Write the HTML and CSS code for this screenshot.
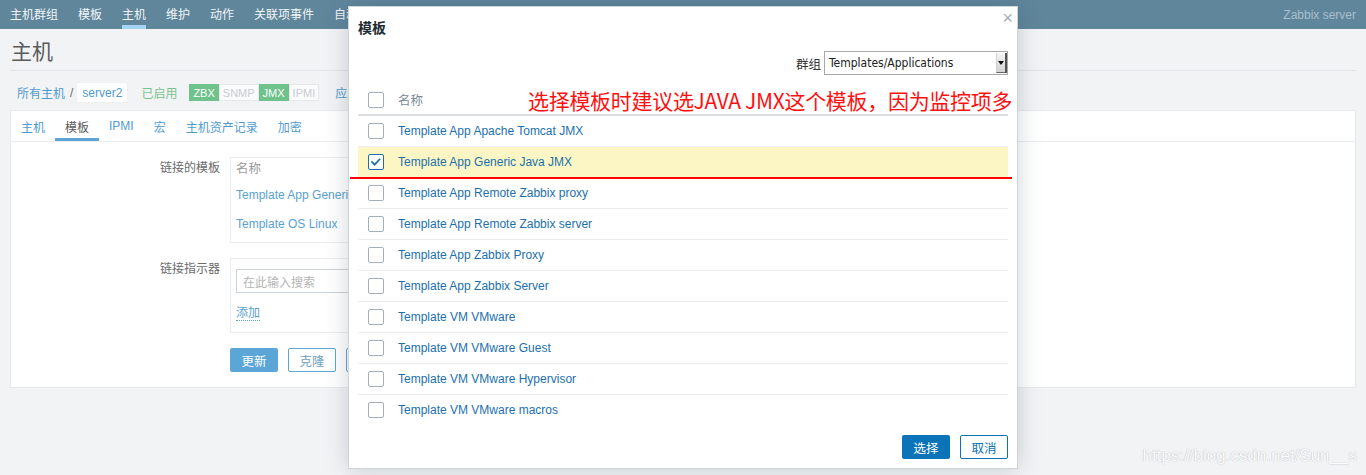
FILE: index.html
```html
<!DOCTYPE html>
<html lang="zh">
<head>
<meta charset="utf-8">
<title>主机</title>
<link rel="stylesheet" href="styles.css">
</head>
<body>
<header class="topbar">
  <nav class="menu">
    <a class="menu-item">主机群组</a>
    <a class="menu-item">模板</a>
    <a class="menu-item active">主机</a>
    <a class="menu-item">维护</a>
    <a class="menu-item">动作</a>
    <a class="menu-item">关联项事件</a>
    <a class="menu-item">自动发现</a>
    <a class="menu-item">服务</a>
  </nav>
  <span class="server-name">Zabbix server</span>
</header>

<main class="page">
  <h1 class="page-title">主机</h1>

  <div class="crumbs">
    <a class="crumb-link first">所有主机</a>
    <span class="crumb-sep">/</span>
    <span class="crumb-current">server2</span>
    <span class="status-on">已启用</span>
    <span class="tags"><span class="tag on">ZBX</span><span class="tag">SNMP</span><span class="tag on">JMX</span><span class="tag">IPMI</span></span>
    <a class="crumb-link apps">应用集</a>
  </div>

  <section class="tabs-box">
    <ul class="tabs">
      <li class="tab">主机</li>
      <li class="tab active">模板</li>
      <li class="tab">IPMI</li>
      <li class="tab">宏</li>
      <li class="tab">主机资产记录</li>
      <li class="tab">加密</li>
    </ul>

    <div class="form">
      <div class="form-row">
        <div class="form-label">链接的模板</div>
        <div class="form-field">
          <div class="linked-box">
            <div class="linked-head">名称</div>
            <div class="linked-item"><a class="plain-link">Template App Generic Java JMX</a></div>
            <div class="linked-item"><a class="plain-link">Template OS Linux</a></div>
          </div>
        </div>
      </div>

      <div class="form-row">
        <div class="form-label">链接指示器</div>
        <div class="form-field">
          <div class="link-box">
            <div class="search-input">在此输入搜索</div>
            <a class="add-link">添加</a>
          </div>
        </div>
      </div>

      <div class="form-row">
        <div class="form-label"></div>
        <div class="form-field buttons">
          <span class="btn primary">更新</span>
          <span class="btn outline">克隆</span>
          <span class="btn outline">全克隆</span>
        </div>
      </div>
    </div>
  </section>
</main>

<div class="dialog">
  <div class="dialog-title">模板</div>
  <span class="dialog-close">×</span>

  <div class="filter-row">
    <span class="filter-label">群组</span>
    <div class="select">
      <span class="select-text">Templates/Applications</span>
      <span class="select-btn"><span class="select-arrow"></span></span>
    </div>
  </div>

  <div class="tpl-table">
    <div class="tpl-row head">
      <span class="cb"></span>
      <span class="head-text">名称</span>
    </div>
    <div class="tpl-row"><span class="cb"></span><a class="tpl-link">Template App Apache Tomcat JMX</a></div>
    <div class="tpl-row selected"><span class="cb checked"><svg viewBox="0 0 16 16" width="14" height="14"><path d="M3.5 8 L6.5 11 L12 5" fill="none" stroke="#1c6fab" stroke-width="2" stroke-linecap="square"/></svg></span><a class="tpl-link">Template App Generic Java JMX</a></div>
    <div class="tpl-row"><span class="cb"></span><a class="tpl-link">Template App Remote Zabbix proxy</a></div>
    <div class="tpl-row"><span class="cb"></span><a class="tpl-link">Template App Remote Zabbix server</a></div>
    <div class="tpl-row"><span class="cb"></span><a class="tpl-link">Template App Zabbix Proxy</a></div>
    <div class="tpl-row"><span class="cb"></span><a class="tpl-link">Template App Zabbix Server</a></div>
    <div class="tpl-row"><span class="cb"></span><a class="tpl-link">Template VM VMware</a></div>
    <div class="tpl-row"><span class="cb"></span><a class="tpl-link">Template VM VMware Guest</a></div>
    <div class="tpl-row"><span class="cb"></span><a class="tpl-link">Template VM VMware Hypervisor</a></div>
    <div class="tpl-row last"><span class="cb"></span><a class="tpl-link">Template VM VMware macros</a></div>
  </div>

  <div class="dialog-footer">
    <span class="dbtn primary">选择</span>
    <span class="dbtn outline">取消</span>
  </div>

  <div class="note">选择模板时建议选JAVA JMX这个模板，因为监控项多</div>
  <div class="note-line"></div>
</div>

<div class="watermark">https://blog.csdn.net/Sun__s</div>
</body>
</html>
```

FILE: styles.css
```css
* { box-sizing: border-box; }

html, body { height: 100%; }

body {
  margin: 0;
  background: #f2f3f5;
  font-family: "Liberation Sans", "Noto Sans CJK SC", sans-serif;
  font-size: 12px;
  color: #1f2c33;
  position: relative;
  overflow: hidden;
}

a { text-decoration: none; cursor: pointer; }

/* ---------- top bar ---------- */
.topbar {
  height: 29px;
  background: #60869c;
  display: flex;
  justify-content: space-between;
}
.menu { display: flex; }
.menu-item {
  margin: 0 10px;
  display: flex;
  align-items: center;
  color: #f1f5f7;
  border-bottom: 4px solid transparent;
  padding-top: 2px;
  white-space: nowrap;
}
.menu-item.active { border-bottom-color: #a5d5f4; }
.server-name {
  color: #a9bfcc;
  padding: 0 10px;
  display: flex;
  align-items: center;
}

/* ---------- page ---------- */
.page { padding: 0 10px; }

.page-title {
  margin: 0;
  padding: 10px 0 5px 1px;
  font-size: 21px;
  line-height: 26px;
  font-weight: normal;
  color: #5b5b5b;
  border-bottom: 1px solid #dfe4e7;
}

.crumbs {
  margin: 11px 0 7px;
  height: 21px;
  display: flex;
  align-items: center;
  white-space: nowrap;
}
.crumb-link { color: #4f9bcf; }
.crumb-link.first { margin-left: 7px; }
.crumb-sep { color: #6a6a6a; margin: 0 3px 0 5px; }
.crumb-current {
  background: #fff;
  height: 21px;
  padding: 0 5px;
  display: flex;
  align-items: center;
  color: #4f9bcf;
  border: 1px solid #eef0f2;
}
.status-on { color: #79c38e; margin-left: 13px; }
.tags { display: flex; margin-left: 12px; }
.tag {
  height: 17px;
  padding: 0 3px;
  font-size: 11px;
  display: flex;
  align-items: center;
  color: #c8ccd0;
  border: 1px solid #e6e8ea;
  background: #fbfbfc;
}
.tag.on { background: #6fc28b; color: #fff; border-color: #6fc28b; }
.crumb-link.apps { margin-left: 16px; }

/* ---------- tab box ---------- */
.tabs-box {
  background: #fff;
  border: 1px solid #e6e9eb;
  padding-bottom: 15px;
}
.tabs {
  list-style: none;
  margin: 0;
  padding: 0;
  display: flex;
  height: 31px;
  border-bottom: 1px solid #ebeef0;
}
.tab {
  padding: 0 10px;
  display: flex;
  align-items: center;
  color: #4f9bcf;
  border-bottom: 3px solid transparent;
  padding-top: 3px;
}
.tab.active { color: #5a5a5a; border-bottom-color: #5ba6d6; }

.form { padding-top: 15px; }
.form-row { display: flex; margin-bottom: 15px; }
.form-row:last-child { margin-bottom: 0; }
.form-label {
  width: 219px;
  padding-right: 10px;
  text-align: right;
  color: #6b6b6b;
  line-height: 22px;
  font-size: 12px;
}
.form-field { flex: 1; }

.linked-box {
  width: 520px;
  border: 1px solid #ebeef0;
  padding: 0 5px 4px;
}
.linked-head { line-height: 22px; color: #9a9a9a; font-size: 12.5px; }
.linked-item { height: 29px; display: flex; align-items: center; }
.plain-link { color: #5aa1d1; }

.link-box {
  width: 520px;
  border: 1px solid #ebeef0;
  padding: 10px 5px 11px;
}
.search-input {
  width: 330px;
  height: 24px;
  border: 1px solid #cbd2d7;
  padding: 0 6px;
  display: flex;
  align-items: center;
  color: #b5b5b5;
}
.add-link {
  display: block;
  width: fit-content;
  margin-top: 13px;
  color: #5aa1d1;
  line-height: 14px;
  border-bottom: 1px dotted #5aa1d1;
}

.buttons { display: flex; gap: 10px; }
.btn {
  height: 24px;
  width: 48px;
  display: flex;
  align-items: center;
  justify-content: center;
  border-radius: 2px;
  font-size: 12.5px;
}
.btn.primary { background: #5ba6d6; color: #fff; }
.btn.outline { border: 1px solid #5ba6d6; color: #6f9fc2; background: #fff; }

/* ---------- dialog ---------- */
.dialog {
  position: absolute;
  left: 348px;
  top: 6px;
  width: 670px;
  height: 463px;
  background: #fff;
  border: 1px solid #cfd6da;
  box-shadow: 0 0 22px rgba(40, 60, 75, 0.22);
  padding: 11px 9px 9px;
  display: flex;
  flex-direction: column;
}
.dialog-title {
  font-size: 14px;
  line-height: 20px;
  font-weight: bold;
  color: #1f2c33;
}
.dialog-close {
  position: absolute;
  right: 4px;
  top: 1px;
  font-size: 18px;
  line-height: 20px;
  color: #a3aeb5;
}

.filter-row {
  margin-top: 13px;
  display: flex;
  justify-content: flex-end;
  align-items: center;
}
.filter-label { margin-right: 3px; color: #333; font-size: 12.5px; }
.select {
  width: 184px;
  height: 24px;
  border: 1px solid #a8a8a8;
  background: #fff;
  display: flex;
  align-items: stretch;
}
.select-text {
  flex: 1;
  padding-left: 4px;
  display: flex;
  align-items: center;
  font-family: "Liberation Sans Narrow", "DejaVu Sans Condensed", "Liberation Sans", sans-serif;
  font-size: 12px;
  color: #222;
}
.select-btn {
  width: 11px;
  margin: 1px 0 1px;
  background: linear-gradient(#f6f6f6, #d2d2d2);
  border-left: 1px solid #d0d0d0;
  border-right: 2px solid #555;
  border-bottom: 1px solid #666;
  display: flex;
  align-items: center;
  justify-content: center;
}
.select-arrow {
  width: 0;
  height: 0;
  border-left: 3px solid transparent;
  border-right: 3px solid transparent;
  border-top: 4px solid #111;
}

.tpl-table { margin-top: 10px; }
.tpl-row {
  height: 31px;
  display: flex;
  align-items: center;
  padding-left: 10px;
  border-bottom: 1px solid #ebeef0;
}
.tpl-row.head { border-bottom: 2px solid #dcdfe2; }
.tpl-row.last { border-bottom: none; height: 30px; }
.tpl-row.selected { background: #fbf6c4; }
.cb {
  width: 16px;
  height: 16px;
  border: 1px solid #a4afb8;
  border-radius: 2px;
  background: #fff;
  margin-right: 14px;
  display: flex;
  align-items: center;
  justify-content: center;
}
.cb.checked { border-color: #1c6fab; }
.head-text { color: #7c8b94; font-size: 12.5px; }
.tpl-link { color: #1c70ad; }

.dialog-footer {
  margin-top: auto;
  display: flex;
  justify-content: flex-end;
  gap: 10px;
}
.dbtn {
  width: 48px;
  height: 24px;
  border-radius: 2px;
  display: flex;
  align-items: center;
  justify-content: center;
  font-size: 12.5px;
}
.dbtn.primary { background: #0b73b7; color: #fff; }
.dbtn.outline { border: 1px solid #0b73b7; color: #0b73b7; background: #fff; }

/* red annotation drawn over the dialog */
.note {
  position: absolute;
  left: 179px;
  top: 80px;
  font-family: "Noto Sans CJK SC", sans-serif;
  font-size: 21px;
  letter-spacing: -0.3px;
  line-height: 26px;
  color: #ff1010;
  white-space: nowrap;
}
.note-line {
  position: absolute;
  left: 1px;
  top: 170px;
  width: 662px;
  height: 2px;
  background: #ff0000;
}

.watermark {
  position: absolute;
  right: 9px;
  top: 445px;
  font-size: 17px;
  line-height: 22px;
  color: rgba(255, 255, 255, 0.95);
  text-shadow: 0 0 1px #b9bdc1, 0 0 1px #c5c9cc;
  white-space: nowrap;
}
```
